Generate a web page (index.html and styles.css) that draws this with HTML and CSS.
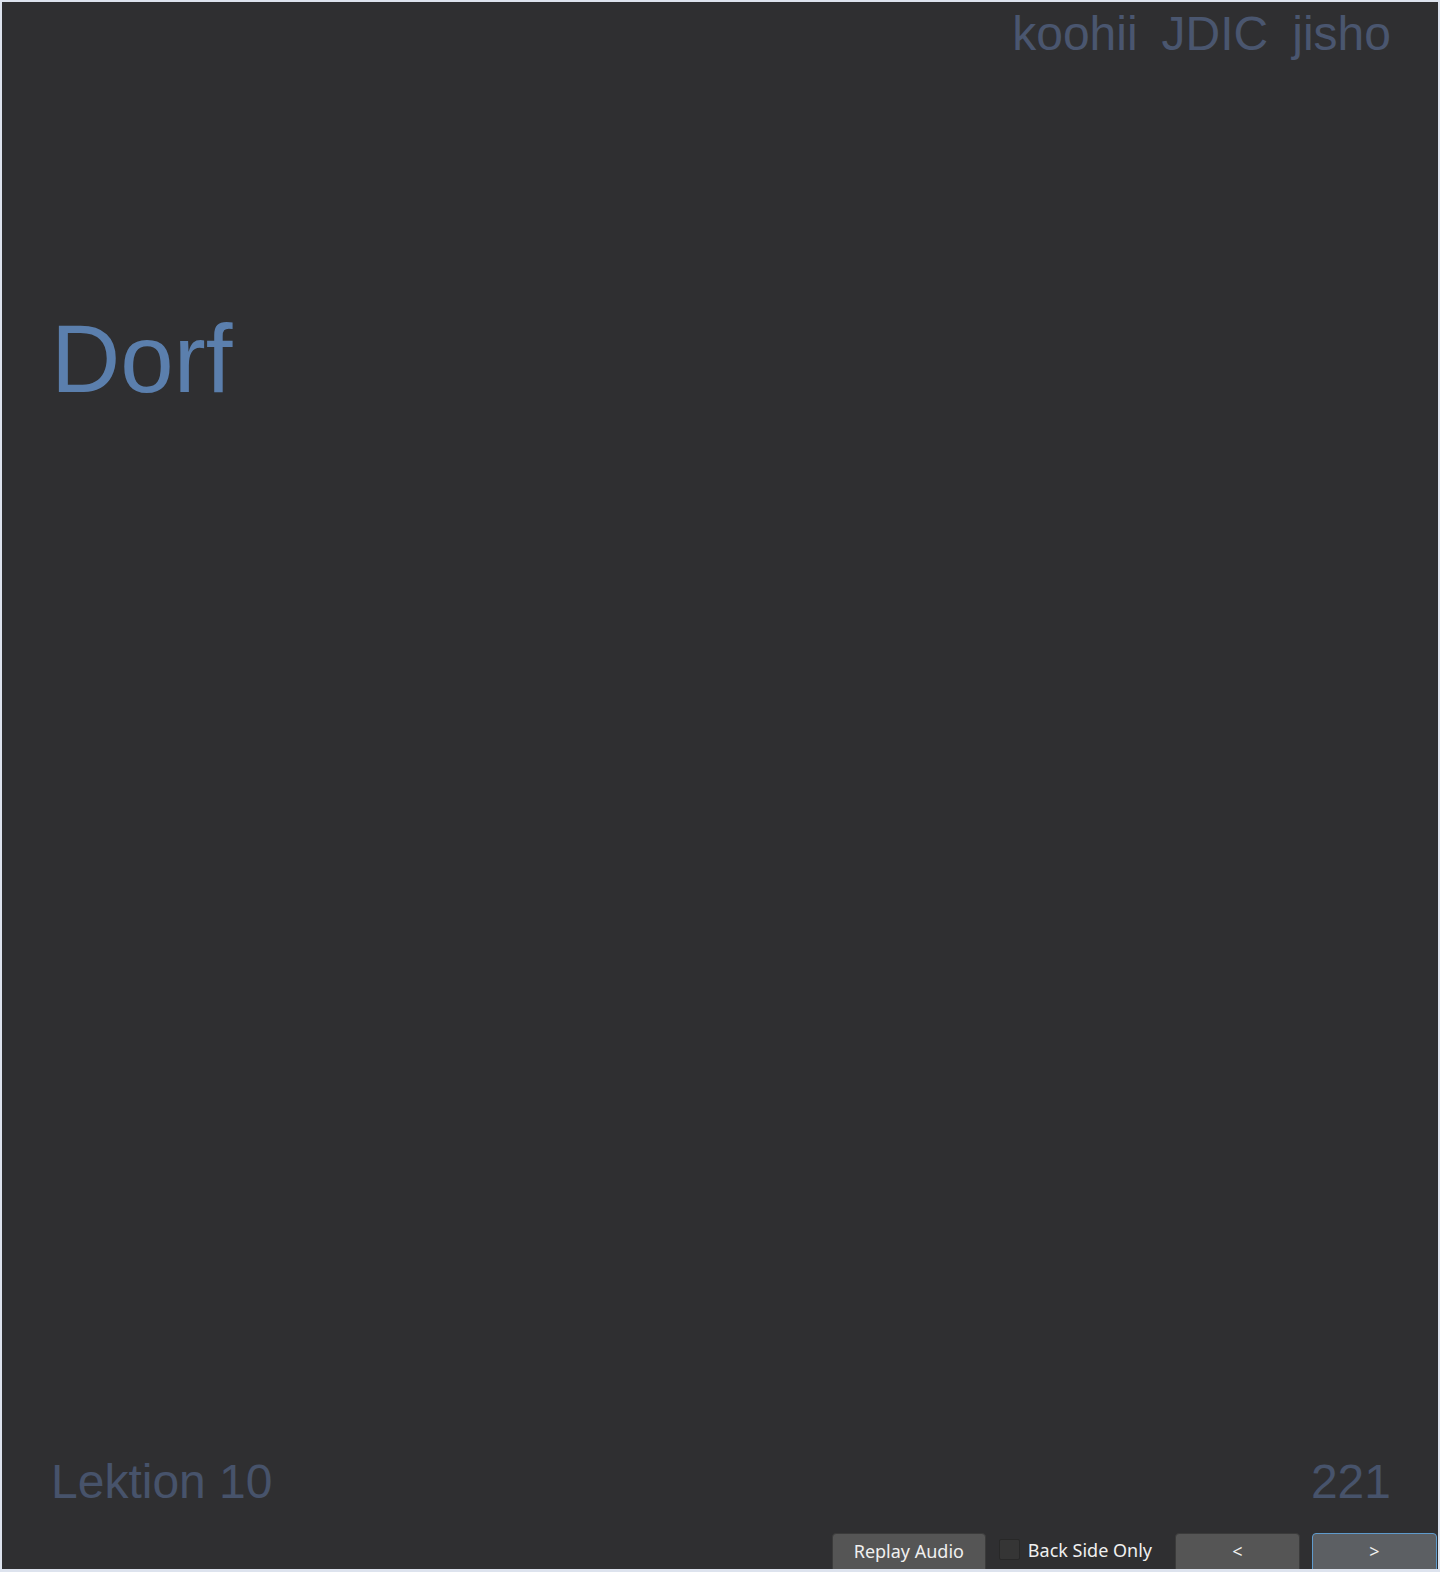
FILE: index.html
```html
<!DOCTYPE html>
<html lang="de">
<head>
<meta charset="utf-8">
<title>Preview</title>
<link rel="stylesheet" href="styles.css">
</head>
<body>
<div class="app">
  <main class="card">
    <nav class="links">
      <a class="link">koohii</a>
      <a class="link">JDIC</a>
      <a class="link">jisho</a>
    </nav>
    <div class="word">Dorf</div>
    <div class="spacer"></div>
    <footer class="footer">
      <span class="lesson">Lektion 10</span>
      <span class="number">221</span>
    </footer>
  </main>
  <div class="bar">
    <button class="btn btn-replay">Replay Audio</button>
    <label class="check"><span class="box"></span><span class="check-label">Back Side Only</span></label>
    <button class="btn btn-nav">&lt;</button>
    <button class="btn btn-nav btn-focus">&gt;</button>
  </div>
</div>
</body>
</html>
```

FILE: styles.css
```css
html, body {
  margin: 0;
  padding: 0;
}
body {
  background: #dde3ee;
  width: 1440px;
  height: 1572px;
  overflow: hidden;
}
.app {
  margin: 2px 2px 0 2px;
  width: 1436px;
  height: 1567px;
  background: #2f2f31;
  display: flex;
  flex-direction: column;
  overflow: hidden;
}
.card {
  flex: 1;
  display: flex;
  flex-direction: column;
  padding: 8px 47px 14px 49px;
  font-family: "Liberation Sans", Arial, sans-serif;
}
.links {
  display: flex;
  justify-content: flex-end;
  gap: 24px;
  font-size: 48px;
  line-height: 1;
  color: #4a566f;
}
.link {
  color: inherit;
  text-decoration: none;
}
.word {
  margin-top: 253px;
  font-size: 96px;
  line-height: 1;
  color: #5b7fad;
}
.spacer {
  flex: 1;
}
.footer {
  display: flex;
  justify-content: space-between;
  font-size: 48px;
  line-height: 1;
  color: #47536b;
}
.bar {
  height: 49px;
  flex: none;
  display: flex;
  justify-content: flex-end;
  align-items: flex-start;
  padding: 13px 1px 0 0;
  box-sizing: border-box;
  overflow: hidden;
  font-family: "Noto Sans", sans-serif;
  font-size: 18px;
}
.btn {
  font-family: "Noto Sans", sans-serif;
  font-size: 18px;
  line-height: 24px;
  color: #f0f0f0;
  background: #555555;
  border: 1px solid #3b3b3b;
  border-radius: 4px;
  padding: 4px 0 11px;
  box-sizing: border-box;
  height: 42px;
  margin: 0;
}
.btn-replay {
  width: 154px;
}
.btn-nav {
  width: 125px;
  margin-left: 12px;
}
.btn-focus {
  background: #5c5f63;
  border-color: #5f9bcc;
}
.check {
  display: flex;
  align-items: center;
  margin-left: 13px;
  margin-right: 11px;
  height: 33px;
  color: #f0f0f0;
}
.box {
  width: 19px;
  height: 19px;
  background: #353535;
  border: 1px solid #282828;
  border-radius: 2px;
  margin-right: 8px;
}
.check-label {
  line-height: 24px;
}
```
